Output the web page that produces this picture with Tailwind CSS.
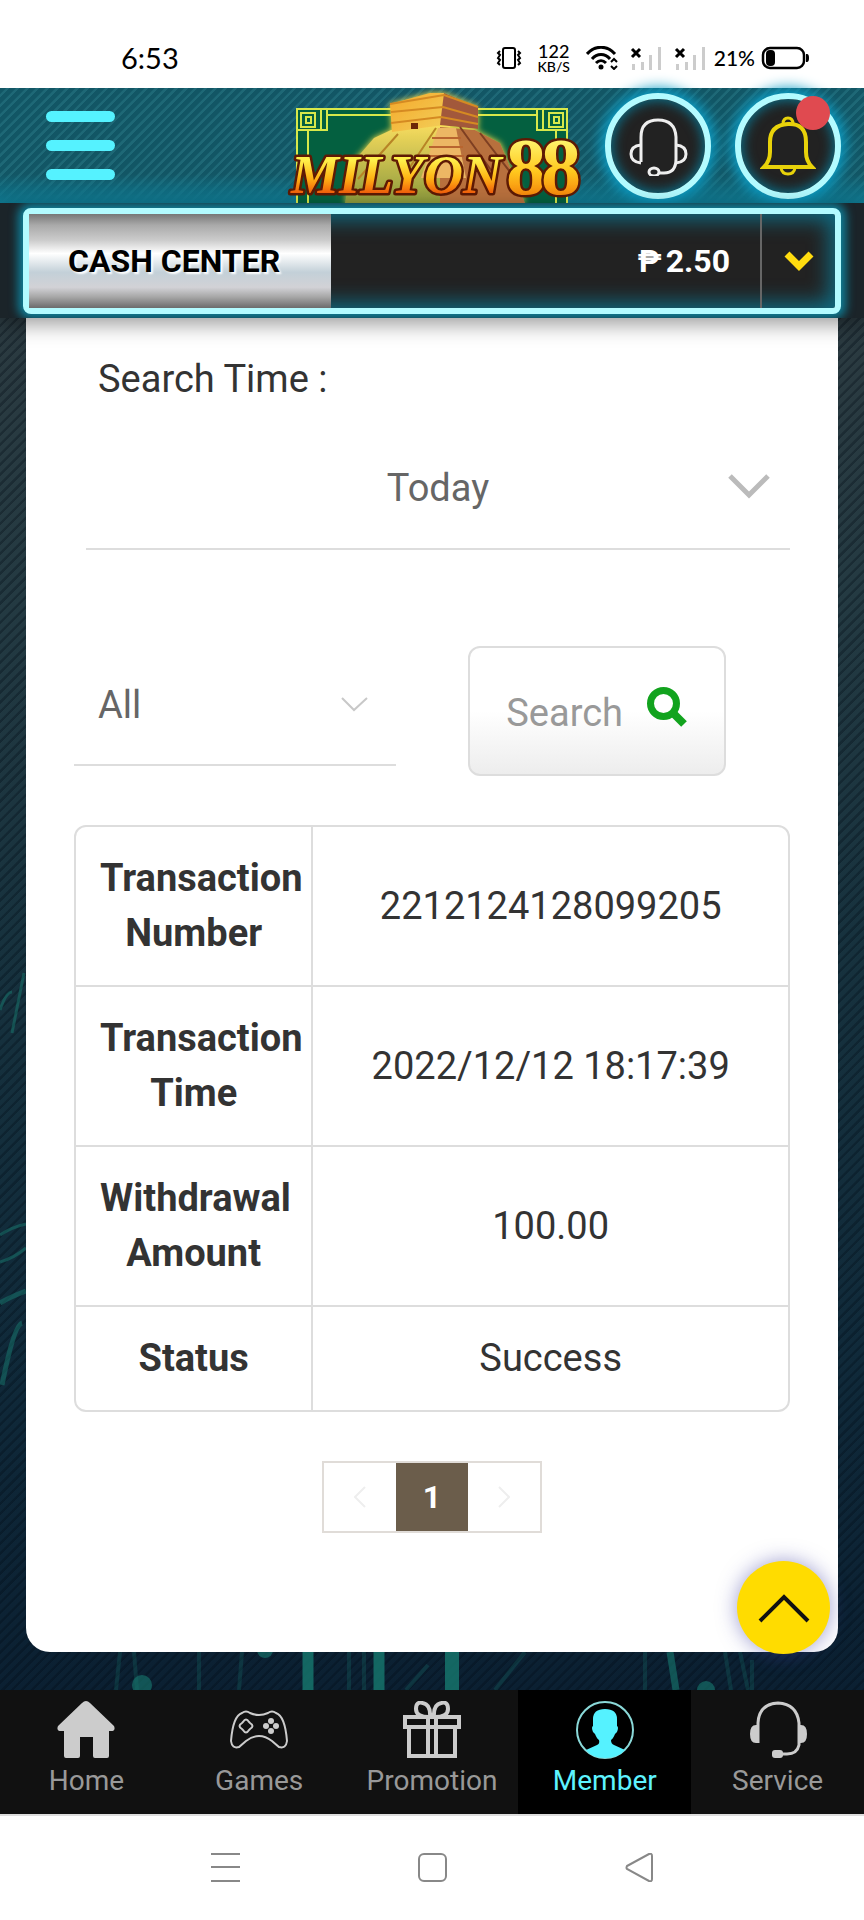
<!DOCTYPE html>
<html lang="en">
<head>
    <meta charset="UTF-8">
    <meta name="viewport" content="width=device-width, initial-scale=1.0">
    <title>Milyon88 - Cash Center</title>
    <script src="https://cdn.jsdelivr.net/npm/@tailwindcss/browser@4"></script>
</head>
<body class="font-[Roboto,sans-serif] antialiased bg-white text-[#333] min-h-screen flex flex-col">

    <!-- Status Bar -->
    <div class="h-[88px] pt-7 pl-[121px] pr-[55px] flex justify-between items-center text-black font-[Lato,sans-serif]">
        <span class="text-[29px]">6:53</span>
        <div class="flex items-center">
            <svg class="w-[26px] h-6 mr-4" viewBox="0 0 26 24" fill="none" stroke="#000" stroke-width="2">
                <rect x="7" y="2" width="12" height="20" rx="2"/>
                <path d="M4 5l-2 2 2 2-2 3 2 2-2 3 2 2M22 5l2 2-2 2 2 3-2 2 2 3-2 2"/>
            </svg>
            <div class="w-8 mr-4 flex flex-col items-center font-medium">
                <span class="text-[18px] leading-[18px]">122</span>
                <span class="text-[14px] leading-[14px]">KB/S</span>
            </div>
            <svg class="w-8 h-6 mr-3" viewBox="0 0 32 24" fill="none" stroke="#000" stroke-width="3">
                <path d="M1 8C9-1 21-1 29 8M6 13c5-6 13-6 18 0M10 17c3-3 7-3 10 0"/>
                <circle cx="15" cy="21" r="2.500" fill="#000" stroke="none"/>
                <path d="M25 16l3-3 3 3M25 20l3 3 3-3" stroke-width="2"/>
            </svg>
            <svg class="w-8 h-6 mr-3" viewBox="0 0 32 24">
                <path d="M2 18h3v6H2zM11 16h3v8h-3zM19 9h3v15h-3zM28 1h3v23h-3z" fill="#ccc"/>
                <path d="M2 3l8 8M10 3l-8 8" stroke="#000" stroke-width="3"/>
            </svg>
            <svg class="w-8 h-6 mr-2" viewBox="0 0 32 24">
                <path d="M2 18h3v6H2zM11 16h3v8h-3zM19 9h3v15h-3zM28 1h3v23h-3z" fill="#ccc"/>
                <path d="M2 3l8 8M10 3l-8 8" stroke="#000" stroke-width="3"/>
            </svg>
            <span class="text-[21px] font-medium mr-1.5">21%</span>
            <svg class="w-12 h-6" viewBox="0 0 48 24">
                <rect x="2" y="2" width="41" height="20" rx="7" fill="none" stroke="#000" stroke-width="2.500"/>
                <rect x="5" y="4" width="9" height="16" rx="4"/>
                <path d="M45 8h1q2 0 2 4t-2 4h-1z"/>
            </svg>
        </div>
    </div>

    <!-- Header -->
    <header class="h-[115px] px-[23px] grid grid-cols-[1fr_300px_1fr] items-center bg-[linear-gradient(to_bottom,transparent_75%,#0f7a92_100%),repeating-linear-gradient(135deg,#125665_0px,#125665_4px,#1e6876_5px,#1e6876_7px)]">
        <button aria-label="Menu" class="ml-[23px] w-[69px] flex flex-col gap-[18px]">
            <span class="h-[11px] rounded-full bg-[#55f2ff]"></span>
            <span class="h-[11px] rounded-full bg-[#55f2ff]"></span>
            <span class="h-[11px] rounded-full bg-[#55f2ff]"></span>
        </button>

        <!-- Logo -->
        <a href="#" aria-label="Milyon88">
            <svg class="w-[300px] h-[115px] overflow-visible" viewBox="282 88 300 115">
                <defs>
                    <linearGradient id="gold" x1="0" y1="0" x2="0" y2="1">
                        <stop offset="0.25" stop-color="#fff04a"/>
                        <stop offset="0.55" stop-color="#ffb414"/>
                        <stop offset="0.85" stop-color="#f0500a"/>
                    </linearGradient>
                    <linearGradient id="gold88" x1="0" y1="0" x2="0" y2="1">
                        <stop offset="0.2" stop-color="#fff36a"/>
                        <stop offset="0.55" stop-color="#ffc81e"/>
                        <stop offset="0.85" stop-color="#f6820a"/>
                    </linearGradient>
                    <linearGradient id="stone" x1="0" y1="0" x2="1" y2="1">
                        <stop offset="0" stop-color="#f5a82a"/>
                        <stop offset="1" stop-color="#f2cf5a"/>
                    </linearGradient>
                    <linearGradient id="slope" x1="0" y1="0" x2="0" y2="1">
                        <stop offset="0" stop-color="#f7dc5e"/>
                        <stop offset="1" stop-color="#8d9a3c"/>
                    </linearGradient>
                    <filter id="glow" x="-20%" y="-20%" width="140%" height="140%">
                        <feDropShadow dx="0" dy="0" stdDeviation="3" flood-color="#ffe04a"/>
                    </filter>
                </defs>
                <rect x="297" y="109" width="270" height="94" fill="#046040"/>
                <path d="M297 203v-94h270v94M308 203v-72M556 203v-72M327 115h210" fill="none" stroke="#d8e84a" stroke-width="2"/>
                <g fill="#046040" stroke="#d8e84a" stroke-width="2">
                    <path d="M297 109h24v21h-24zM543 109h24v21h-24zM321 109h6v21h-6zM537 109h6v21h-6z"/>
                    <path d="M301 113h14v14h-14zM549 113h14v14h-14z"/>
                    <path d="M306 117h5v6h-5zM554 117h5v6h-5z"/>
                </g>
                <!-- Pyramid -->
                <g filter="url(#glow)">
                    <path d="M391 130L374 138 355 160 345 203H450V125z" fill="url(#slope)"/>
                    <path d="M440 127L475 130 500 143 525 203H440z" fill="#b8703c"/>
                    <path d="M390 104L430 93 444 93v32l-52 7z" fill="url(#stone)"/>
                    <path d="M444 93l34 14v22l-38-4z" fill="#a2583a"/>
                </g>
                <path d="M390 104L444 95l34 12M391 112l52-5 35 10M391 123l50-6 37 7" fill="none" stroke="#d58a22" stroke-width="2"/>
                <path d="M398 134l-40 45M436 128l-30 45" stroke="#b88426" stroke-width="2"/>
                <path d="M460 127l36 50M480 133l34 44" stroke="#7e3f22" stroke-width="2"/>
                <path d="M438 128h18l10 50h-45z" fill="#edb764"/>
                <path d="M432 138h29M429 147h34M426 156h38" stroke="#b9652f" stroke-width="2"/>
                <rect x="411" y="123" width="7" height="6" fill="#6b2708"/>
                <g stroke="#5e1a04" stroke-width="5" paint-order="stroke" stroke-linejoin="round" font-family="Liberation Serif, serif" font-weight="700">
                    <text x="291" y="193" font-size="54" font-style="italic" fill="url(#gold)">MILYON</text>
                    <text x="506" y="194" font-size="80" fill="url(#gold88)">8</text>
                    <text x="541" y="194" font-size="80" fill="url(#gold88)">8</text>
                </g>
            </svg>
        </a>

        <div class="flex justify-end gap-6">
            <button aria-label="Support" class="size-[106px] rounded-full border-[6px] border-[#b3fbff] bg-[#222] shadow-[0_0_14px_5px_#0b9cc4,inset_0_0_12px_2px_#0c6f88] flex items-center justify-center">
                <svg class="w-[60px] h-[60px]" viewBox="0 0 60 60" fill="none" stroke="#eee" stroke-width="3">
                    <path d="M13 46V21Q13 4 30 4t18 17v22q0 14-12 14h-6"/>
                    <path d="M13 29Q3 30 3 38t10 9M48 29q10 1 10 9t-10 9"/>
                    <ellipse cx="26" cy="56" rx="5" ry="4" fill="#222"/>
                </svg>
            </button>
            <button aria-label="Notifications" class="relative size-[106px] rounded-full border-[6px] border-[#b3fbff] bg-[#222] shadow-[0_0_14px_5px_#0b9cc4,inset_0_0_12px_2px_#0c6f88] flex items-center justify-center">
                <svg class="w-[56px] h-[60px]" viewBox="0 0 56 60" fill="none" stroke="#e8d20a" stroke-width="4">
                    <path d="M4 51Q10 45 10 36V26Q10 9 28 8t18 18v10q0 9 6 15z"/>
                    <path d="M23 8q0-6 5-6t5 6M21 52q1 6 7 6t7-6" stroke-width="3"/>
                </svg>
                <span class="absolute -top-[3px] right-[5px] size-[34px] rounded-full bg-[#e04a50]"></span>
            </button>
        </div>
    </header>

    <!-- Cash Center Bar -->
    <div class="relative z-10 px-[23px] pt-[5px] pb-1 overflow-hidden bg-[#1b2429] shadow-[0_6px_20px_rgba(0,0,0,0.4)]">
        <div class="h-[106px] flex rounded-lg border-[6px] border-[#b3fbff] bg-[#222] shadow-[0_0_10px_5px_#0f7f98,inset_0_0_20px_6px_#106a80]">
            <button class="w-3/8 text-[32px] font-bold text-black [text-shadow:2px_2px_2px_#fff] pr-[12px] bg-[linear-gradient(to_bottom,#777_0%,#aaa_12%,#ccc_28%,#fff_42%,#c3d0d8_62%,#d2d2d6_78%,#a8a8a8_88%,#6c6c6c_100%)]">CASH CENTER</button>
            <div class="flex-1 pr-[30px] flex items-center justify-end gap-1 text-[32px] font-bold text-white">
                <span>₱</span><span>2.50</span>
            </div>
            <button aria-label="Show balance" class="w-[75px] border-l-2 border-[#666] flex items-center justify-center">
                <svg class="w-[30px] h-[22px]" viewBox="0 0 30 22" fill="none" stroke="#ffdc0f" stroke-width="7">
                    <path d="M3 4l12 12L27 4"/>
                </svg>
            </button>
        </div>
    </div>

    <!-- Main Content -->
    <main class="relative flex-1 px-[26px] pb-[38px] bg-[linear-gradient(to_bottom,#2b3a40_0%,#243a42_20%,#17323e_45%,#102a3a_75%,#0b2032_100%)]">
        <div class="absolute inset-0 bg-[repeating-linear-gradient(135deg,transparent_0px,transparent_4px,rgba(0,10,20,0.3)_5px,rgba(0,10,20,0.3)_7px)]"></div>
        <!-- Background light streaks -->
        <svg class="absolute bottom-0 left-0 w-full" viewBox="0 920 864 770" fill="none" stroke="#17796f">
            <g stroke-opacity="0.5" stroke-width="3">
                <path d="M0 1010q6-18 12-18M12 1033l12-60"/>
                <path d="M0 1235q12-8 26-11M0 1262q14-4 26-14"/>
                <path d="M0 1303q10-6 26-12M2 1385q12-60 20-62" stroke-width="5"/>
            </g>
            <g stroke-opacity="0.25" stroke-width="4">
                <path d="M120 1652l-4 38M134 1652l3 38M199 1652v38M242 1652l-3 38M349 1652v38M364 1652v38M428 1665l-22 25M525 1652l-30 38M645 1652v38M725 1652l6 38M740 1652l8 38M752 1660v30"/>
            </g>
            <path d="M308 1652v38M379 1652v38" stroke-width="11" stroke-opacity="0.8"/>
            <path d="M452 1652v38" stroke-width="14" stroke-opacity="0.8"/>
            <path d="M670 1652l6 38" stroke-width="7" stroke-opacity="0.6"/>
            <g fill="#17796f" fill-opacity="0.6" stroke="none">
                <circle cx="142" cy="1685" r="10"/>
                <circle cx="265" cy="1650" r="8"/>
                <circle cx="706" cy="1690" r="9"/>
            </g>
        </svg>

        <div class="relative bg-white rounded-b-3xl px-12 pt-[34px] pb-[119px]">
            <label for="search-time" class="block pl-6 text-[38px] leading-[55px]">Search Time :</label>
            <div class="relative mt-[22px] ml-3">
                <select id="search-time" class="appearance-none w-full h-[121px] border-b-2 border-[#ddd] text-[38px] text-[#666] text-center [text-align-last:center]">
                    <option>Today</option>
                    <option>Yesterday</option>
                    <option>Last 7 days</option>
                </select>
                <svg class="absolute right-5 top-[44px] w-[42px] h-7 pointer-events-none" viewBox="0 0 42 28" fill="none" stroke="#bbb" stroke-width="5">
                    <path d="M2 3l19 19L40 3"/>
                </svg>
            </div>

            <div class="mt-24 flex items-start gap-[10%]">
                <div class="relative w-[45%]">
                    <select aria-label="Status" class="appearance-none w-full h-[120px] pl-6 border-b-2 border-[#ddd] text-[38px] text-[#666]">
                        <option>All</option>
                        <option>Success</option>
                        <option>Failed</option>
                    </select>
                    <svg class="absolute right-7 top-[50px] w-[27px] h-4 pointer-events-none" viewBox="0 0 27 16" fill="none" stroke="#c8c8c8" stroke-width="2">
                        <path d="M1 2l12 12L26 2"/>
                    </svg>
                </div>
                <button class="w-[36%] h-[130px] pt-1 flex items-center justify-center gap-6 border-2 border-[#ddd] rounded-xl bg-linear-to-b from-white from-50% to-[#ededed] text-[38px] text-[#999]">
                    Search
                    <svg class="w-10 h-10 mb-3" viewBox="0 0 40 40" fill="none" stroke="#12a31e">
                        <circle cx="16.500" cy="16.500" r="13" stroke-width="7"/>
                        <path d="M26 26l11 11" stroke-width="8"/>
                    </svg>
                </button>
            </div>

            <!-- Transaction Table -->
            <div class="mt-[49px] border-2 border-[#ddd] rounded-xl overflow-hidden">
                <table class="w-full table-fixed border-separate border-spacing-0 text-[38px] leading-[55px] text-center">
                    <tbody>
                        <tr>
                            <th scope="row" class="w-1/3 px-6 py-6 border-r-2 border-b-2 border-[#ddd] font-bold">Transaction Number</th>
                            <td class="border-b-2 border-[#ddd]">2212124128099205</td>
                        </tr>
                        <tr>
                            <th scope="row" class="px-6 py-6 border-r-2 border-b-2 border-[#ddd] font-bold">Transaction Time</th>
                            <td class="border-b-2 border-[#ddd]">2022/12/12 18:17:39</td>
                        </tr>
                        <tr>
                            <th scope="row" class="px-6 py-6 border-r-2 border-b-2 border-[#ddd] font-bold">Withdrawal Amount</th>
                            <td class="border-b-2 border-[#ddd]">100.00</td>
                        </tr>
                        <tr>
                            <th scope="row" class="px-6 py-6 border-r-2 border-[#ddd] font-bold">Status</th>
                            <td>Success</td>
                        </tr>
                    </tbody>
                </table>
            </div>

            <!-- Pagination -->
            <nav aria-label="Pagination" class="mt-[49px] flex justify-center">
                <div class="flex h-[72px] border-2 border-[#e0dcd8]">
                    <button aria-label="Previous page" class="w-[72px] flex items-center justify-center">
                        <svg class="w-3 h-6" viewBox="0 0 12 24" fill="none" stroke="#eee" stroke-width="2"><path d="M11 2L1 12l10 10"/></svg>
                    </button>
                    <button class="w-[72px] bg-[#6b5d4b] text-white text-[32px] font-bold">1</button>
                    <button aria-label="Next page" class="w-[72px] flex items-center justify-center">
                        <svg class="w-3 h-6" viewBox="0 0 12 24" fill="none" stroke="#eee" stroke-width="2"><path d="M1 2l10 10L1 22"/></svg>
                    </button>
                </div>
            </nav>

            <!-- Back to top -->
            <button aria-label="Back to top" class="absolute right-2 -bottom-0.5 size-[93px] rounded-full bg-[#ffdc00] shadow-[0_0_20px_rgba(60,60,160,0.5)] flex items-center justify-center">
                <svg class="w-[52px] h-[30px]" viewBox="0 0 52 30" fill="none" stroke="#111" stroke-width="4"><path d="M2 28L26 4l24 24"/></svg>
            </button>
        </div>
    </main>

    <!-- Bottom Navigation -->
    <nav class="h-[124px] grid grid-cols-5 bg-[#111] text-[28px] leading-8 text-[#999] text-center">
        <a href="#" class="pt-[11px] flex flex-col items-center gap-1.5">
            <svg class="w-[58px] h-[58px]" viewBox="0 0 58 58" fill="#ccc">
                <path d="M29 0q2 0 4 2l24 23q2 5-3 5h-2v25q0 2-2 2H38q-2 0-2-2V36H23v19q0 2-2 2H9q-2 0-2-2V30H4q-5 0-3-5L25 2q2-2 4-2z"/>
            </svg>
            Home
        </a>
        <a href="#" class="pt-[11px] flex flex-col items-center gap-1.5">
            <svg class="w-[58px] h-[58px]" viewBox="0 0 58 58" fill="none" stroke="#ccc" stroke-width="2">
                <path d="M12 12Q16 9 20 12q9 4 18 0 4-3 8 0 9 3 11 28-1 8-8 6l-7-6q-13-10-26 0l-7 6q-7 2-8-6Q3 15 12 12z"/>
                <path d="M13 21q3-5 6 0l1 1q5 3 0 6l-1 1q-3 5-6 0l-1-1q-5-3 0-6z"/>
                <g fill="#ccc" stroke="none"><circle cx="41" cy="20" r="3"/><circle cx="41" cy="30" r="3"/><circle cx="36" cy="25" r="3"/><circle cx="46" cy="25" r="3"/></g>
            </svg>
            Games
        </a>
        <a href="#" class="pt-[11px] flex flex-col items-center gap-1.5">
            <svg class="w-[58px] h-[58px]" viewBox="0 0 58 58" fill="none" stroke="#ccc" stroke-width="4">
                <path d="M2 16h54v10H2zM6 26h46v29H6zM25 16v39M33 16v39"/>
                <path d="M26 16q-13 0-13-8t7-6q8 2 7 14M32 16q13 0 13-8t-7-6q-8 2-7 14"/>
            </svg>
            Promotion
        </a>
        <a href="#" aria-current="page" class="pt-[11px] flex flex-col items-center gap-1.5 bg-black text-[#5ef3ff]">
            <svg class="w-[58px] h-[58px]" viewBox="0 0 58 58">
                <circle cx="29" cy="29" r="28" fill="none" stroke="#8ad8d8" stroke-width="2"/>
                <path d="M29 8q12 0 12 10v7q2 1 0 6l-2 2q-2 5-4 6 0 4 3 5l11 5Q42 57 29 57T10 49l11-5q3-1 2-5-2-1-4-6l-2-2q-2-5 0-6v-7Q17 8 29 8z" fill="#55f2ff"/>
            </svg>
            Member
        </a>
        <a href="#" class="pt-[11px] flex flex-col items-center gap-1.5">
            <svg class="w-[58px] h-[58px]" viewBox="0 0 58 58" fill="none" stroke="#ccc" stroke-width="3">
                <path d="M9 42V22Q10 3 29 2q19 1 21 20v22q-2 9-12 9h-8"/>
                <path d="M10 24v18H7q-6 0-6-9t6-9zM49 24v18h3q6 0 6-9t-6-9z" fill="#ccc" stroke="none"/>
                <rect x="23" y="49" width="11" height="8" rx="3" fill="#ccc" stroke="none"/>
            </svg>
            Service
        </a>
    </nav>

    <!-- System Navigation -->
    <div class="h-[106px] pb-0.5 border-t-2 border-[#ddd] flex items-center justify-center gap-[178px]">
        <button aria-label="Recent apps">
            <svg class="w-[29px] h-[29px]" viewBox="0 0 29 29" stroke="#888" stroke-width="2"><path d="M0 1h29M0 14h29M0 28h29"/></svg>
        </button>
        <button aria-label="Home screen">
            <svg class="w-[29px] h-[29px]" viewBox="0 0 29 29" fill="none" stroke="#888" stroke-width="2"><rect x="1" y="1" width="27" height="27" rx="5"/></svg>
        </button>
        <button aria-label="Back">
            <svg class="w-[29px] h-[29px]" viewBox="0 0 29 29" fill="none" stroke="#888" stroke-width="2"><path d="M2 13L24 1q3-1 3 2v23q0 3-3 2L2 16q-1-1 0-3z"/></svg>
        </button>
    </div>
</body>
</html>
